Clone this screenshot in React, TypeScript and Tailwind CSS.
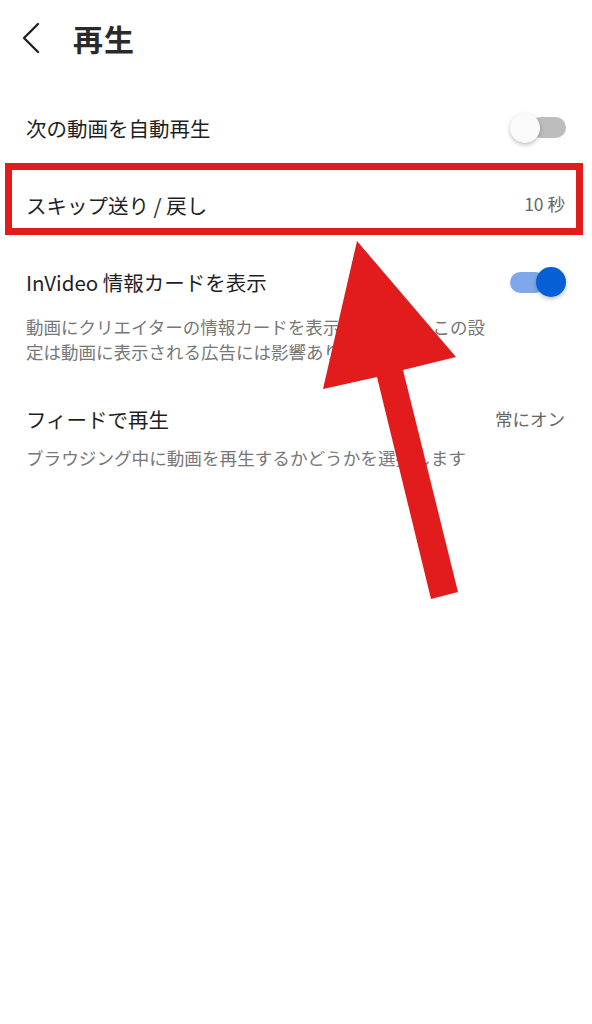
import React from 'react';

const jp = { fontFamily: '"Noto Sans CJK JP", "Noto Sans", sans-serif' };

function Toggle({ on }: { on: boolean }) {
  return (
    <div className={`relative flex h-[30px] w-[56px] items-center ${on ? 'justify-start' : 'justify-end'}`}>
      <div className={`h-[21px] w-[36px] rounded-full ${on ? 'bg-[#7fa8ea]' : 'bg-[#bdbdbd]'}`} />
      <div
        className={`absolute top-0 h-[30px] w-[30px] rounded-full shadow-[0_2px_4px_rgba(0,0,0,0.25)] ${
          on ? 'right-0 bg-[#065fd4]' : 'left-0 bg-[#fafafa]'
        }`}
      />
    </div>
  );
}

export default function App() {
  return (
    <div className="relative min-h-[1024px] w-full bg-white text-[#1f1f1f]" style={jp}>
      {/* header */}
      <header className="flex h-[76px] items-center">
        <svg className="ml-[21px]" width="20" height="32" viewBox="0 0 20 32" fill="none">
          <path d="M17 2 L3 16 L17 30" stroke="#222" strokeWidth="2.4" strokeLinecap="round" strokeLinejoin="round" />
        </svg>
        <h1 className="ml-[32px] text-[30px] font-bold leading-none tracking-[1px] text-[#2a2a2a]">再生</h1>
      </header>

      <div className="mt-[13px] flex flex-col">
        <div className="flex h-[77px] items-center justify-between pl-[26px] pr-[26px]">
          <span className="text-[20.5px] leading-[30px]">次の動画を自動再生</span>
          <Toggle on={false} />
        </div>

        <div className="flex h-[77px] items-center justify-between pl-[26px] pr-[27px]">
          <span className="text-[20.5px] leading-[30px]">スキップ送り / 戻し</span>
          <span className="text-[17.5px] text-[#666]">10 秒</span>
        </div>

        <div className="flex flex-col px-[26px] pt-[24px]">
          <div className="flex items-center justify-between">
            <span className="text-[20.5px] leading-[30px]">InVideo 情報カードを表示</span>
            <Toggle on={true} />
          </div>
          <p className="mt-[17px] w-[470px] text-[17.5px] leading-[25px] text-[#777]">
            動画にクリエイターの情報カードを表示<span className="tracking-[6px]">します。</span>この設定は動画に表示される広告には影響ありません。
          </p>
        </div>

        <div className="flex flex-col px-[26px] pt-[40px]">
          <div className="flex items-center justify-between">
            <span className="text-[20.5px] leading-[30px]">フィードで再生</span>
            <span className="pr-[1px] text-[17.5px] text-[#666]">常にオン</span>
          </div>
          <p className="mt-[11px] text-[17.6px] leading-[25px] text-[#777]">
            ブラウジング中に動画を再生するかどうかを選択します
          </p>
        </div>
      </div>

      {/* annotation: red frame */}
      <div className="pointer-events-none absolute left-[5px] top-[163px] h-[72px] w-[578px] border-[7px] border-[#e21c1c]" />

      {/* annotation: red arrow */}
      <svg className="pointer-events-none absolute left-0 top-0" width="592" height="1024" viewBox="0 0 592 1024">
        <polygon points="357,241 456,357 403,370 458,592 431,599 377,377 323,389" fill="#e21c1c" />
      </svg>
    </div>
  );
}
